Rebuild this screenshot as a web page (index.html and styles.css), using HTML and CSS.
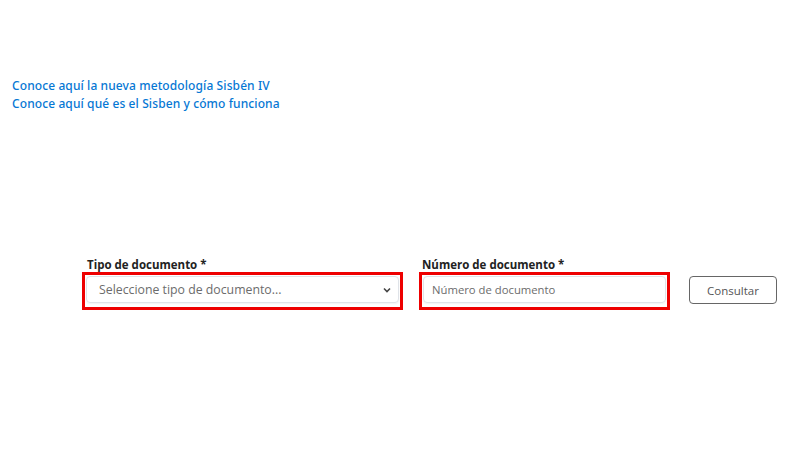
FILE: index.html
```html
<!DOCTYPE html>
<html lang="es">
<head>
<meta charset="utf-8">
<link rel="stylesheet" href="styles.css">
</head>
<body>
<div class="links">
  <a href="#" class="link">Conoce aquí la nueva metodología Sisbén IV</a>
  <a href="#" class="link">Conoce aquí qué es el Sisben y cómo funciona</a>
</div>
<form class="form">
  <div class="field field-type">
    <label class="label">Tipo de documento *</label>
    <div class="highlight">
      <div class="control select">
        <span class="placeholder">Seleccione tipo de documento...</span>
        <svg class="chevron" width="10" height="8" viewBox="0 0 10 8"><path d="M2 2.5 L5 5.5 L8 2.5" fill="none" stroke="#444" stroke-width="1.6"/></svg>
      </div>
    </div>
  </div>
  <div class="field field-num">
    <label class="label">Número de documento *</label>
    <div class="highlight">
      <div class="control input">
        <span class="placeholder ph-num">Número de documento</span>
      </div>
    </div>
  </div>
  <button type="button" class="btn">Consultar</button>
</form>
</body>
</html>
```
FILE: styles.css
```css
html, body {
  margin: 0;
  padding: 0;
  background: #fff;
}
body {
  width: 800px;
  height: 450px;
  overflow: hidden;
  font-family: "Open Sans", "Noto Sans", sans-serif;
}
.links {
  display: flex;
  flex-direction: column;
  padding: 77px 0 0 12px;
}
.link {
  color: #0677d4;
  text-decoration: none;
  font-family: "Noto Sans", sans-serif;
  font-size: 12px;
  font-weight: 500;
  line-height: 18px;
  letter-spacing: 0.1px;
}
.form {
  display: flex;
  align-items: flex-end;
  margin: 145px 0 0 82px;
}
.field {
  display: flex;
  flex-direction: column;
}
.field-type { width: 321px; }
.field-num { width: 251px; margin-left: 16px; }
.label {
  font-family: "Open Sans", sans-serif;
  font-weight: 700;
  font-size: 11.5px;
  color: #222;
  line-height: 14px;
  padding-left: 5px;
  margin-bottom: 0;
}
.field-num .label { padding-left: 3px; }
.highlight {
  border: 3px solid #ee0000;
  padding: 1px 1px 4px 1px;
}
.control {
  height: 27px;
  box-sizing: border-box;
  border: 1px solid #dfe3e8;
  border-radius: 4px;
  box-shadow: 0 1px 2px rgba(0,0,0,0.06);
  display: flex;
  align-items: center;
  padding-left: 12px;
}
.select { justify-content: space-between; padding-right: 6px; }
.input { padding-left: 8px; }
.placeholder {
  font-size: 12.3px;
  color: #6c6c6c;
}
.ph-num { font-size: 11.3px; }
.chevron { display: block; }
.btn {
  margin: 0 0 6px 19px;
  width: 88px;
  height: 28px;
  background: #fff;
  border: 1px solid #666;
  border-radius: 4px;
  font-family: "Open Sans", sans-serif;
  font-size: 11.5px;
  color: #555;
  padding: 0;
}
```
